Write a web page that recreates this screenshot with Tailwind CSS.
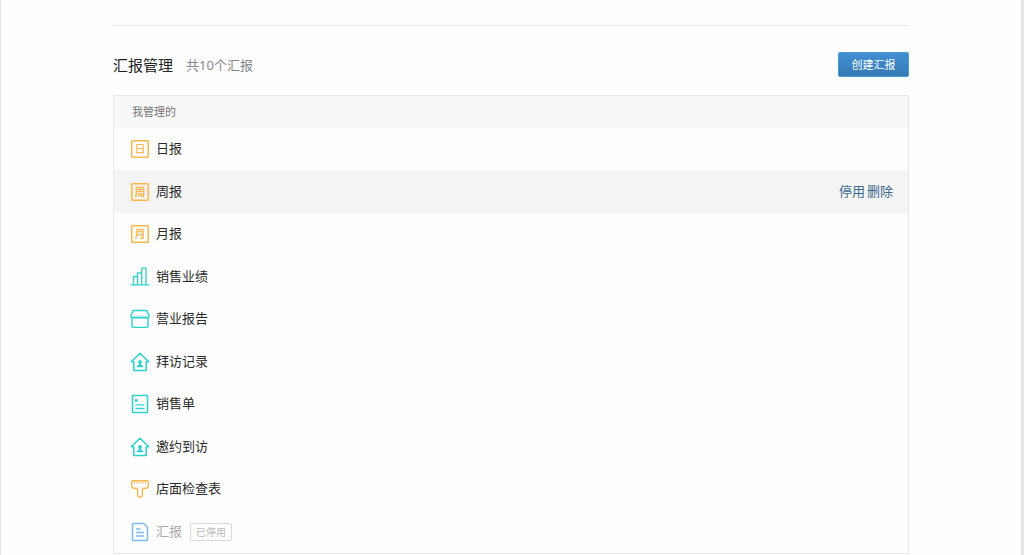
<!DOCTYPE html>
<html lang="zh-CN">

<head>
    <meta charset="UTF-8">
    <meta name="viewport" content="width=device-width, initial-scale=1.0">
    <title>汇报管理</title>
    <script src="https://cdn.jsdelivr.net/npm/@tailwindcss/browser@4"></script>
</head>

<body class="bg-[#e6e6e6] font-['Noto_Sans','Noto_Sans_CJK_SC',sans-serif] text-[13px] text-[#2a2a2a]">
    <div class="min-h-screen ml-px mr-[3px] bg-[#fefefe] pt-[25px]">
        <main class="max-w-[796px] mx-auto border-t border-[#e9e9e9]">
            <div class="flex items-center justify-between pt-[26px] pb-[18px]">
                <div class="flex items-center gap-[13px]">
                    <h2 class="text-[15px] leading-6 text-[#222]">汇报管理</h2>
                    <span class="leading-6 text-[#888]">共10个汇报</span>
                </div>
                <button type="button" class="w-[71px] h-[25px] rounded-xs border border-[#4a9ad4] bg-linear-to-b from-[#428fd5] to-[#357ab3] text-[11px] leading-4 text-white">创建汇报</button>
            </div>

            <section class="border border-[#e8e8e8]">
                <h3 class="flex items-center h-8 pl-[18px] bg-[#f8f8f8] text-[11px] text-[#777]">我管理的</h3>
                <ul>
                    <li class="flex items-center gap-[6px] px-4 h-[42px] even:h-[43px]">
                        <svg class="size-5" viewBox="0 0 20 20" fill="none" stroke="#fdb64a" stroke-width="1.5">
                            <rect x="1.75" y="1.75" width="16.5" height="16.5" rx="0.5" />
                            <text x="10" y="14" text-anchor="middle" font-size="11" font-weight="500" fill="#fdb64a" stroke="none">日</text>
                        </svg>
                        <span>日报</span>
                    </li>
                    <li class="flex items-center gap-[6px] px-4 h-[42px] even:h-[43px] bg-[#f4f4f4]">
                        <svg class="size-5" viewBox="0 0 20 20" fill="none" stroke="#fdb64a" stroke-width="1.5">
                            <rect x="1.75" y="1.75" width="16.5" height="16.5" rx="0.5" />
                            <text x="10" y="14" text-anchor="middle" font-size="11" font-weight="700" fill="#fdb64a" stroke="none">周</text>
                        </svg>
                        <span>周报</span>
                        <div class="ml-auto flex gap-[2px] -mr-px text-[#38698f]">
                            <a href="#">停用</a>
                            <a href="#">删除</a>
                        </div>
                    </li>
                    <li class="flex items-center gap-[6px] px-4 h-[42px] even:h-[43px]">
                        <svg class="size-5" viewBox="0 0 20 20" fill="none" stroke="#fdb64a" stroke-width="1.5">
                            <rect x="1.75" y="1.75" width="16.5" height="16.5" rx="0.5" />
                            <text x="10" y="14" text-anchor="middle" font-size="11" font-weight="700" fill="#fdb64a" stroke="none">月</text>
                        </svg>
                        <span>月报</span>
                    </li>
                    <li class="flex items-center gap-[6px] px-4 h-[42px] even:h-[43px]">
                        <svg class="size-5" viewBox="0 0 20 20" fill="none" stroke="#2bd3cb" stroke-width="1.3" stroke-linejoin="round" stroke-linecap="round">
                            <path d="M1 17.8H19M3.5 17.8V9.5H7.5V17.8M7.5 9.5V6H11.7V17.8M11.7 6V1.2H16V17.8" />
                        </svg>
                        <span>销售业绩</span>
                    </li>
                    <li class="flex items-center gap-[6px] px-4 h-[42px] even:h-[43px]">
                        <svg class="size-5" viewBox="0 0 20 20" fill="none" stroke="#2bd3cb" stroke-width="1.4" stroke-linejoin="round">
                            <path d="M3.9 1.5H16.1C16.6 1.5 16.9 1.7 17.1 2.1L19.2 7C19.2 8.2 18.5 8.8 17.5 8.8H2.5C1.5 8.8 0.8 8.2 0.8 7L2.9 2.1C3.1 1.7 3.4 1.5 3.9 1.5Z" />
                            <path d="M2 8.8V17.3C2 18 2.4 18.4 3.1 18.4H16.9C17.6 18.4 18 18 18 17.3V8.8" />
                            <path d="M4.2 6.6V8.8M7.1 6.6V8.8M10 6.6V8.8M12.9 6.6V8.8M15.8 6.6V8.8" stroke-width="1" />
                        </svg>
                        <span>营业报告</span>
                    </li>
                    <li class="flex items-center gap-[6px] px-4 h-[42px] even:h-[43px]">
                        <svg class="size-5" viewBox="0 0 20 20" fill="none" stroke="#2bd3cb" stroke-width="1.5" stroke-linejoin="round">
                            <path d="M10 1.2L18.8 9.8H16.2V18.5H3.8V9.8H1.2Z" />
                            <circle cx="10" cy="10" r="1.9" fill="#2bd3cb" stroke="none" />
                            <path d="M9.1 11H10.9V12.8L13.2 13.7V15.2H6.8V13.7L9.1 12.8Z" fill="#2bd3cb" stroke="none" />
                        </svg>
                        <span>拜访记录</span>
                    </li>
                    <li class="flex items-center gap-[6px] px-4 h-[42px] even:h-[43px]">
                        <svg class="size-5" viewBox="0 0 20 20" fill="none" stroke="#2bd3cb" stroke-width="1.5">
                            <rect x="2.5" y="1.5" width="15" height="17" rx="0.5" />
                            <rect x="5" y="5.2" width="2.6" height="2.6" fill="#2bd3cb" stroke="none" />
                            <path d="M5.5 10.8H14.5M5.5 14.5H14.5" stroke-width="1.3" />
                        </svg>
                        <span>销售单</span>
                    </li>
                    <li class="flex items-center gap-[6px] px-4 h-[42px] even:h-[43px]">
                        <svg class="size-5" viewBox="0 0 20 20" fill="none" stroke="#2bd3cb" stroke-width="1.5" stroke-linejoin="round">
                            <path d="M10 1.2L18.8 9.8H16.2V18.5H3.8V9.8H1.2Z" />
                            <circle cx="10" cy="10" r="1.9" fill="#2bd3cb" stroke="none" />
                            <path d="M9.1 11H10.9V12.8L13.2 13.7V15.2H6.8V13.7L9.1 12.8Z" fill="#2bd3cb" stroke="none" />
                        </svg>
                        <span>邀约到访</span>
                    </li>
                    <li class="flex items-center gap-[6px] px-4 h-[42px] even:h-[43px]">
                        <svg class="size-5" viewBox="0 0 20 20" fill="none" stroke="#fdb64a" stroke-width="1.4" stroke-linejoin="round">
                            <path d="M2.5 1.6H17.5C18 1.6 18.3 1.9 18.3 2.4V7C18.3 8.5 17.5 9.3 16 9.3H14.2C12.9 9.3 12.4 10 12.4 11.2V15.8C12.4 17.4 11.4 18.2 10 18.2S7.6 17.4 7.6 15.8V11.2C7.6 10 7.1 9.3 5.8 9.3H4C2.5 9.3 1.7 8.5 1.7 7V2.4C1.7 1.9 2 1.6 2.5 1.6Z" />
                            <path d="M4.5 2V4.6M7.2 2V4.6M10 2V4.6M12.8 2V4.6M15.5 2V4.6" stroke-width="1" />
                        </svg>
                        <span>店面检查表</span>
                    </li>
                    <li class="flex items-center gap-[6px] px-4 h-[42px] even:h-[43px] text-[#aaa]">
                        <svg class="size-5" viewBox="0 0 20 20" fill="none" stroke="#7cbcf6" stroke-width="1.5" stroke-linejoin="round">
                            <path d="M3.3 1.5H13.7L17.5 5.3V17.7C17.5 18.2 17.2 18.5 16.7 18.5H3.3C2.8 18.5 2.5 18.2 2.5 17.7V2.3C2.5 1.8 2.8 1.5 3.3 1.5Z" />
                            <path d="M6 7H10.5M6 10.5H14M6 14H14" stroke-width="1.3" />
                        </svg>
                        <span>汇报</span>
                        <span class="ml-0.5 px-[5px] rounded-xs border border-[#d8d8d8] text-[10px] leading-4 text-[#bbb]">已停用</span>
                    </li>
                </ul>
            </section>
        </main>
    </div>
</body>

</html>
